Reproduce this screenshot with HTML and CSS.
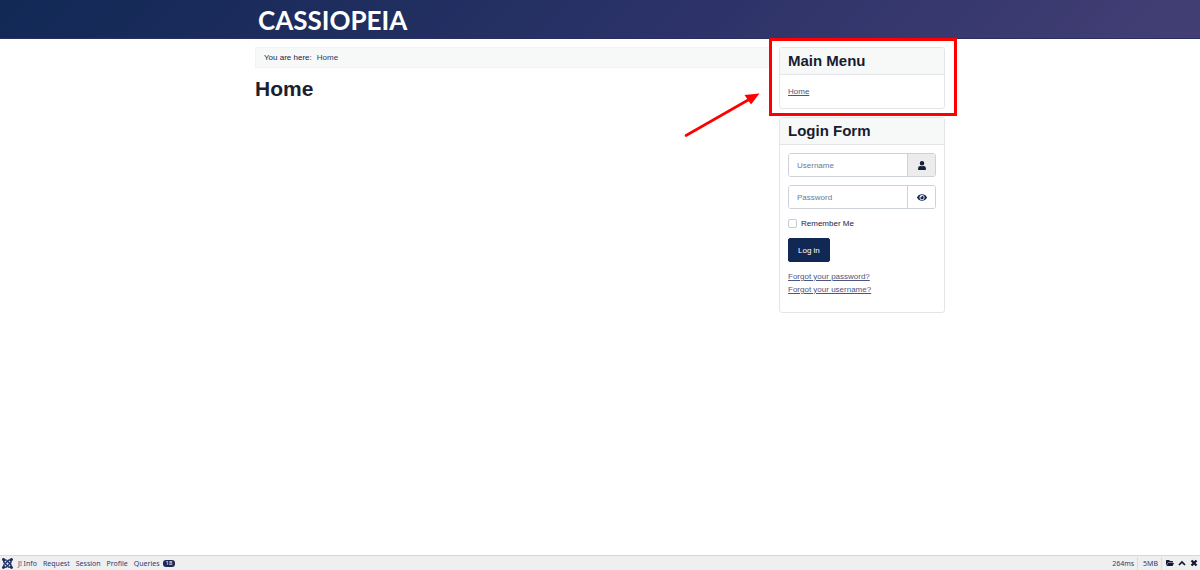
FILE: index.html
```html
<!DOCTYPE html>
<html lang="en">
<head>
<meta charset="utf-8">
<meta name="viewport" content="width=device-width, initial-scale=1">
<title>Home</title>
<link rel="stylesheet" href="styles.css">
</head>
<body>
<header class="header">
  <div class="container"><a class="brand" href="#">CASSIOPEIA</a></div>
</header>
<div class="container site-grid">
  <main class="content">
    <nav class="breadcrumbs" aria-label="Breadcrumbs"><span>You are here:</span><span class="crumb">Home</span></nav>
    <h1 class="page-title">Home</h1>
  </main>
  <aside class="sidebar">
    <div class="highlighted">
      <section class="card">
        <h2 class="card-header">Main Menu</h2>
        <nav class="card-body menu-body"><a class="link" href="#">Home</a></nav>
      </section>
      <div class="highlight-box"></div>
      <svg class="highlight-arrow" width="76" height="46" viewBox="0 0 76 46" aria-hidden="true">
        <path d="M2 42.500L65 6.500" stroke="#f00" stroke-width="2.600" stroke-linecap="round"/>
        <path d="M75.500 .5L60.500 2L67 11.500Z" fill="#f00"/>
      </svg>
    </div>
    <section class="card">
      <h2 class="card-header">Login Form</h2>
      <form class="card-body login-form">
        <div class="input-group">
          <input class="field" type="text" placeholder="Username" aria-label="Username">
          <span class="addon addon-shaded">
            <svg width="8" height="9" viewBox="0 0 448 512" aria-hidden="true"><path fill="currentColor" d="M224 256A128 128 0 1 0 224 0a128 128 0 0 0 0 256zm90 32h-17a174 174 0 0 1-146 0h-17A134 134 0 0 0 0 422v42a48 48 0 0 0 48 48h352a48 48 0 0 0 48-48v-42A134 134 0 0 0 314 288z"/></svg>
          </span>
        </div>
        <div class="input-group">
          <input class="field" type="password" placeholder="Password" aria-label="Password">
          <button class="addon" type="button" aria-label="Show password">
            <svg width="10" height="9" viewBox="0 0 576 512" aria-hidden="true"><path fill="currentColor" d="M572 241C518 135 410 64 288 64S58 135 4 241a32 32 0 0 0 0 30c54 106 162 177 284 177s230-71 284-177a32 32 0 0 0 0-30zM288 400a144 144 0 1 1 0-288 144 144 0 0 1 0 288zm0-240a95 95 0 0 0-25 4 48 48 0 0 1-67 67 96 96 0 1 0 92-71z"/></svg>
          </button>
        </div>
        <label class="remember"><input class="check" type="checkbox">Remember Me</label>
        <button class="login-button" type="button">Log in</button>
        <div class="help-links">
          <a class="link" href="#">Forgot your password?</a>
          <a class="link" href="#">Forgot your username?</a>
        </div>
      </form>
    </section>
  </aside>
</div>
<footer class="debugbar">
  <svg class="joomla" width="11" height="11" viewBox="0 32 448 448" aria-hidden="true">
    <path fill="currentColor" d="M.6 92.1C.6 58.8 27.4 32 60.4 32c30 0 54.5 21.9 59.2 50.2 32.6-7.6 67.1.6 96.500 30l-44.3 44.3c-20.5-20.5-42.6-16.3-55.4-3.500-14.3 14.3-14.3 37.9 0 52.2l99.5 99.500-44 44.300c-87.700-87.200-49.700-49.700-99.800-99.700-26.800-26.500-35-64.800-24.800-98.900C20.400 144.600.6 120.700.6 92.100zm129.500 116.400l44.300 44.300c10-10 89.700-89.700 99.700-99.800 14.300-14.300 37.600-14.300 51.900 0 12.800 12.800 17 35-3.500 55.400l44 44.300c31.200-31.200 38.500-67.600 28.900-101.200 29.200-4.100 51.900-29.200 51.900-59.500 0-33.200-26.800-60.100-59.800-60.100-30.300 0-55.400 22.500-59.500 51.600-33.800-9.900-71.700-1.500-98.300 25.100-18.300 19.100-71.100 71.500-99.600 99.900zm266.300 152.200c8.200-32.700-.9-68.500-26.300-93.900-11.800-12.200 5 4.700-99.500-99.700l-44.300 44.300 99.700 99.700c14.300 14.300 14.300 37.600 0 51.900-12.800 12.800-35 17-55.400-3.500l-44 44.300c27.600 30.200 68 38.800 102.700 28 5.500 27.400 29.700 48.100 58.900 48.100 33 0 59.800-26.800 59.800-60.100 0-30.200-22.500-55-51.600-59.100zm-84.300-53.100l-44-44.300c-87 86.400-50.400 50.400-99.700 99.800-14.300 14.300-37.600 14.300-51.900 0-13.100-13.400-16.900-35.300 3.200-55.400l-44-44.300c-30.200 30.200-38 65.200-29.500 98.300-26.700 6-46.200 29.900-46.200 58.200C0 453.200 26.800 480 59.800 480c28.600 0 52.500-19.800 58.600-46.700 32.700 8.200 68.500-.6 94.200-26 32.100-32 12.200-12.400 99.500-99.700z"/>
  </svg>
  <nav class="debug-tabs" aria-label="Debug">
    <a href="#">J! Info</a><a href="#">Request</a><a href="#">Session</a><a href="#">Profile</a><a href="#">Queries<span class="badge">18</span></a>
  </nav>
  <div class="debug-status">
    <span class="stat">264ms</span><span class="stat">5MB</span>
    <button class="tool" type="button" aria-label="Open"><svg width="8" height="8" viewBox="0 0 16 16"><path fill="currentColor" d="M0 13V3l1-1h5l2 2h5l1 1v2H4zM1 14L4 8h12l-3 6z"/></svg></button>
    <button class="tool" type="button" aria-label="Minimize"><svg width="8" height="8" viewBox="0 0 16 16"><path fill="none" stroke="currentColor" stroke-width="3.500" d="M2 12l6-6 6 6"/></svg></button>
    <button class="tool" type="button" aria-label="Close"><svg width="8" height="8" viewBox="0 0 16 16"><path fill="none" stroke="currentColor" stroke-width="4.500" d="M3 3l10 10M13 3L3 13"/></svg></button>
  </div>
</footer>
</body>
</html>
```
FILE: styles.css
```css
* { box-sizing: border-box; }
body {
  display: flex;
  flex-direction: column;
  min-height: 100vh;
  margin: 0;
  background: #fff;
  color: #22262a;
  font: 8px/13px "Liberation Sans", Arial, sans-serif;
}
button, input { font: inherit; color: inherit; }
svg { display: block; }
.container { width: 100%; max-width: 690px; margin: 0 auto; }
.header {
  padding: 7px 0 4px;
  background: linear-gradient(135deg, #112855 0%, #2b3267 55%, #433f75 100%);
  border-bottom: 1px solid #29305f;
}
.brand {
  display: block;
  padding-left: 3px;
  color: #fff;
  font: 700 26px/27px Lato, sans-serif;
  text-decoration: none;
}
.site-grid {
  display: grid;
  grid-template-columns: minmax(0, 1fr) 166px;
  gap: 9px;
  padding-top: 8px;
}
.breadcrumbs {
  display: flex;
  gap: 5px;
  padding: 3px 8px;
  background: #f7f8f8;
  border: 1px solid #f2f3f3;
  color: #1c2447;
}
.crumb { color: #2f3a66; }
.page-title { margin: 8px 0; font-size: 21px; line-height: 26px; color: #1b1f2f; }
.sidebar { display: flex; flex-direction: column; gap: 8px; }
.highlighted { position: relative; }
.highlight-box { position: absolute; inset: -9px -12px -7px -10px; border: 3px solid #f00; }
.highlight-arrow { position: absolute; top: 46px; left: -95px; }
.card { border: 1px solid #e3e5e8; border-radius: 3px; background: #fff; }
.card-header {
  margin: 0;
  padding: 4px 8px;
  border-bottom: 1px solid #e3e5e8;
  background: #f7f8f8;
  color: #171c30;
  font-size: 15px;
  line-height: 18px;
}
.card-body { padding: 8px; }
.menu-body { padding-top: 10px; padding-bottom: 10px; }
.link { color: #4b5681; text-decoration: underline; }
.login-form { display: flex; flex-direction: column; align-items: flex-start; gap: 8px; padding-bottom: 16px; }
.input-group { display: flex; width: 100%; height: 24px; border: 1px solid #cdd1d8; border-radius: 3px; overflow: hidden; }
.field { flex: 1; min-width: 0; padding: 0 8px; border: 0; background: #fff; }
.field::placeholder { color: #6d7799; opacity: 1; }
.addon {
  display: grid;
  place-items: center;
  width: 28px;
  padding: 0;
  border: 0;
  border-left: 1px solid #cdd1d8;
  background: #fff;
  color: #16254f;
}
.addon-shaded { background: #ececec; color: #17203a; }
.remember { display: flex; align-items: center; gap: 4px; color: #1c2447; }
.check { appearance: none; width: 9px; height: 9px; margin: 0; border: 1px solid #c6cad1; border-radius: 2px; background: #fff; }
.login-button { height: 24px; padding: 0 9px; border: 1px solid #112855; border-radius: 2px; background: #112855; color: #fff; }
.help-links { display: flex; flex-direction: column; }
.debugbar {
  display: flex;
  align-items: center;
  height: 15px;
  margin-top: auto;
  padding: 0 2px;
  border-top: 1px solid #d8d8d8;
  background: #efefef;
  color: #313b6b;
  font: 7px/13px "Noto Sans", sans-serif;
}
.joomla { color: #1c2a62; }
.debug-tabs { display: flex; gap: 6px; margin-left: 5px; }
.debug-tabs a { display: flex; align-items: center; color: inherit; text-decoration: none; }
.badge { margin-left: 3px; padding: 0 3px; border-radius: 3px; background: #1c2a55; color: #fff; font-size: 6px; line-height: 7px; }
.debug-status { display: flex; align-items: center; margin-left: auto; }
.stat { padding: 0 3px 0 5px; border-right: 1px solid #ddd; }
.tool { margin-left: 4px; padding: 0; border: 0; background: none; color: #111a30; }
```
